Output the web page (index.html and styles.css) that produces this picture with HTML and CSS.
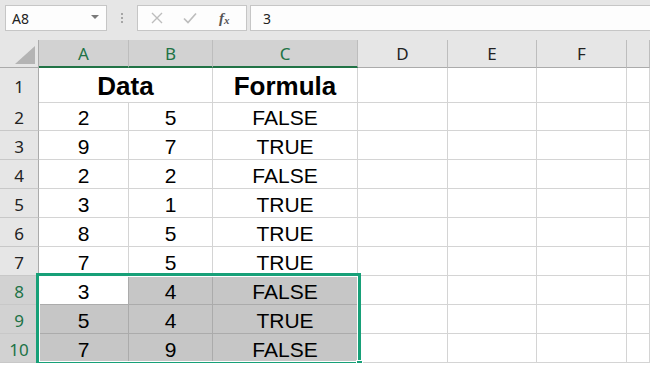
FILE: index.html
```html
<!DOCTYPE html>
<html lang="en">
<head>
  <meta charset="UTF-8" />
  <title>Book1 - Excel</title>
  <link rel="stylesheet" href="styles.css">
</head>
<body>
  <div class="toolbar">
    <div class="namebox">
      <span>A8</span>
      <span class="caret"></span>
    </div>
    <div class="grip"><i></i><i></i><i></i></div>
    <div class="fx-buttons">
      <svg class="btn-x" width="12" height="12" viewBox="0 0 12 12"><path d="M1 1L11 11M11 1L1 11" stroke="#bdbdbd" stroke-width="1.4" fill="none"/></svg>
      <svg class="btn-ok" width="14" height="12" viewBox="0 0 14 12"><path d="M1 6.5L5 10.5L13 1.5" stroke="#bdbdbd" stroke-width="1.7" fill="none"/></svg>
      <span class="fx">f<sub>x</sub></span>
    </div>
    <div class="formula-input">3</div>
  </div>

  <div class="sheet">
    <div class="row head">
      <div class="corner">
        <svg width="20" height="18" viewBox="0 0 20 18"><path d="M20 0L20 18L0 18Z" fill="#b4b4b4"/></svg>
      </div>
      <div class="col active">A</div>
      <div class="col active">B</div>
      <div class="col active">C</div>
      <div class="col">D</div>
      <div class="col">E</div>
      <div class="col">F</div>
      <div class="col"></div>
    </div>

    <div class="row first">
      <div class="num">1</div>
      <div class="cell bold span2">Data</div>
      <div class="cell bold">Formula</div>
      <div class="cell"></div><div class="cell"></div><div class="cell"></div><div class="cell"></div>
    </div>
    <div class="row">
      <div class="num">2</div>
      <div class="cell">2</div><div class="cell">5</div><div class="cell">FALSE</div>
      <div class="cell"></div><div class="cell"></div><div class="cell"></div><div class="cell"></div>
    </div>
    <div class="row">
      <div class="num">3</div>
      <div class="cell">9</div><div class="cell">7</div><div class="cell">TRUE</div>
      <div class="cell"></div><div class="cell"></div><div class="cell"></div><div class="cell"></div>
    </div>
    <div class="row">
      <div class="num">4</div>
      <div class="cell">2</div><div class="cell">2</div><div class="cell">FALSE</div>
      <div class="cell"></div><div class="cell"></div><div class="cell"></div><div class="cell"></div>
    </div>
    <div class="row">
      <div class="num">5</div>
      <div class="cell">3</div><div class="cell">1</div><div class="cell">TRUE</div>
      <div class="cell"></div><div class="cell"></div><div class="cell"></div><div class="cell"></div>
    </div>
    <div class="row">
      <div class="num">6</div>
      <div class="cell">8</div><div class="cell">5</div><div class="cell">TRUE</div>
      <div class="cell"></div><div class="cell"></div><div class="cell"></div><div class="cell"></div>
    </div>
    <div class="row">
      <div class="num">7</div>
      <div class="cell">7</div><div class="cell">5</div><div class="cell">TRUE</div>
      <div class="cell"></div><div class="cell"></div><div class="cell"></div><div class="cell"></div>
    </div>
    <div class="row">
      <div class="num active">8</div>
      <div class="cell current">3</div><div class="cell sel">4</div><div class="cell sel">FALSE</div>
      <div class="cell"></div><div class="cell"></div><div class="cell"></div><div class="cell"></div>
    </div>
    <div class="row">
      <div class="num active">9</div>
      <div class="cell sel">5</div><div class="cell sel">4</div><div class="cell sel">TRUE</div>
      <div class="cell"></div><div class="cell"></div><div class="cell"></div><div class="cell"></div>
    </div>
    <div class="row">
      <div class="num active">10</div>
      <div class="cell sel">7</div><div class="cell sel">9</div><div class="cell sel">FALSE</div>
      <div class="cell"></div><div class="cell"></div><div class="cell"></div><div class="cell"></div>
    </div>

    <!-- selected range A8:C10 -->
    <div class="selection"><span class="handle"></span></div>
  </div>
</body>
</html>
```

FILE: styles.css
```css
/* General */
body {
  margin: 0;
  background-color: #ffffff;
  font-family: "Noto Sans", "Open Sans", sans-serif;
  color: #222;
  overflow: hidden;
}

/* Formula bar */
.toolbar {
  display: flex;
  align-items: flex-start;
  height: 40px;
  box-sizing: border-box;
  padding: 5px 0 0 5px;
  background-color: #e6e6e6;
}

.namebox,
.fx-buttons,
.formula-input {
  height: 26px;
  box-sizing: border-box;
  border: 1px solid #c6c6c6;
  background-color: #fdfdfd;
  display: flex;
  align-items: center;
}

.namebox {
  width: 102px;
  padding: 0 7px 0 6px;
  justify-content: space-between;
  font-size: 14px;
}

.caret {
  width: 0;
  height: 0;
  border-left: 4px solid transparent;
  border-right: 4px solid transparent;
  border-top: 4px solid #7a7a7a;
  margin-top: -2px;
}

.grip {
  width: 30px;
  height: 26px;
  display: flex;
  flex-direction: column;
  align-items: center;
  justify-content: center;
  gap: 2px;
}

.grip i {
  width: 2px;
  height: 2px;
  background-color: #a6a6a6;
}

.fx-buttons {
  width: 110px;
  padding-left: 13px;
}

.btn-x {
  margin-right: 20px;
}

.btn-ok {
  margin-right: 22px;
}

.fx {
  font-family: "Liberation Serif", serif;
  font-style: italic;
  font-weight: bold;
  font-size: 15px;
  color: #555;
}

.fx sub {
  font-size: 11px;
  vertical-align: -1px;
}

.formula-input {
  flex: 1;
  margin-left: 3px;
  padding-left: 12px;
  border-right: none;
  font-size: 14px;
}

/* Sheet grid */
.sheet {
  position: relative;
}

.row {
  display: grid;
  grid-template-columns: 39px 90px 84px 145px 90px 89px 90px 1fr;
  height: 29px;
}

.row.head {
  height: 28px;
}

.row.first {
  height: 34px;
}

.corner,
.col,
.num {
  background-color: #e6e6e6;
  box-sizing: border-box;
  font-size: 17px;
  color: #222;
  display: flex;
  justify-content: center;
  align-items: center;
}

.corner {
  border-right: 1px solid #ababab;
  border-bottom: 1px solid #ababab;
  align-items: flex-end;
  justify-content: flex-end;
  padding: 0 3px 3px 0;
}

.col {
  border-right: 1px solid #bdbdbd;
  border-bottom: 1px solid #ababab;
}

.col.active {
  background-color: #d2d2d2;
  color: #217346;
  border-bottom: 2px solid #217346;
}

.num {
  border-right: 1px solid #ababab;
  border-bottom: 1px solid #c8c8c8;
  padding-top: 2px;
}

.num.active {
  background-color: #d2d2d2;
  color: #217346;
}

.cell {
  box-sizing: border-box;
  border-right: 1px solid #d4d4d4;
  border-bottom: 1px solid #d4d4d4;
  font-family: "Liberation Sans", Arial, sans-serif;
  font-size: 21px;
  color: #000;
  display: flex;
  justify-content: center;
  align-items: center;
  padding-top: 3px;
}

.cell.bold {
  font-weight: bold;
  font-size: 26px;
}

.cell.span2 {
  grid-column: span 2;
}

.cell.sel {
  background-color: #c6c6c6;
  border-color: #ababab;
}

.cell.current {
  border-right-color: #ababab;
  border-bottom-color: #ababab;
}

/* Selection outline */
.selection {
  position: absolute;
  left: 36px;
  top: 233px;
  width: 325px;
  height: 92px;
  box-sizing: border-box;
  border: 3px solid #17a078;
  box-shadow: inset 0 0 0 1px #ffffff;
}

.handle {
  position: absolute;
  right: -5px;
  bottom: -5px;
  width: 5px;
  height: 5px;
  background-color: #17a078;
  border: 1px solid #ffffff;
}
```
